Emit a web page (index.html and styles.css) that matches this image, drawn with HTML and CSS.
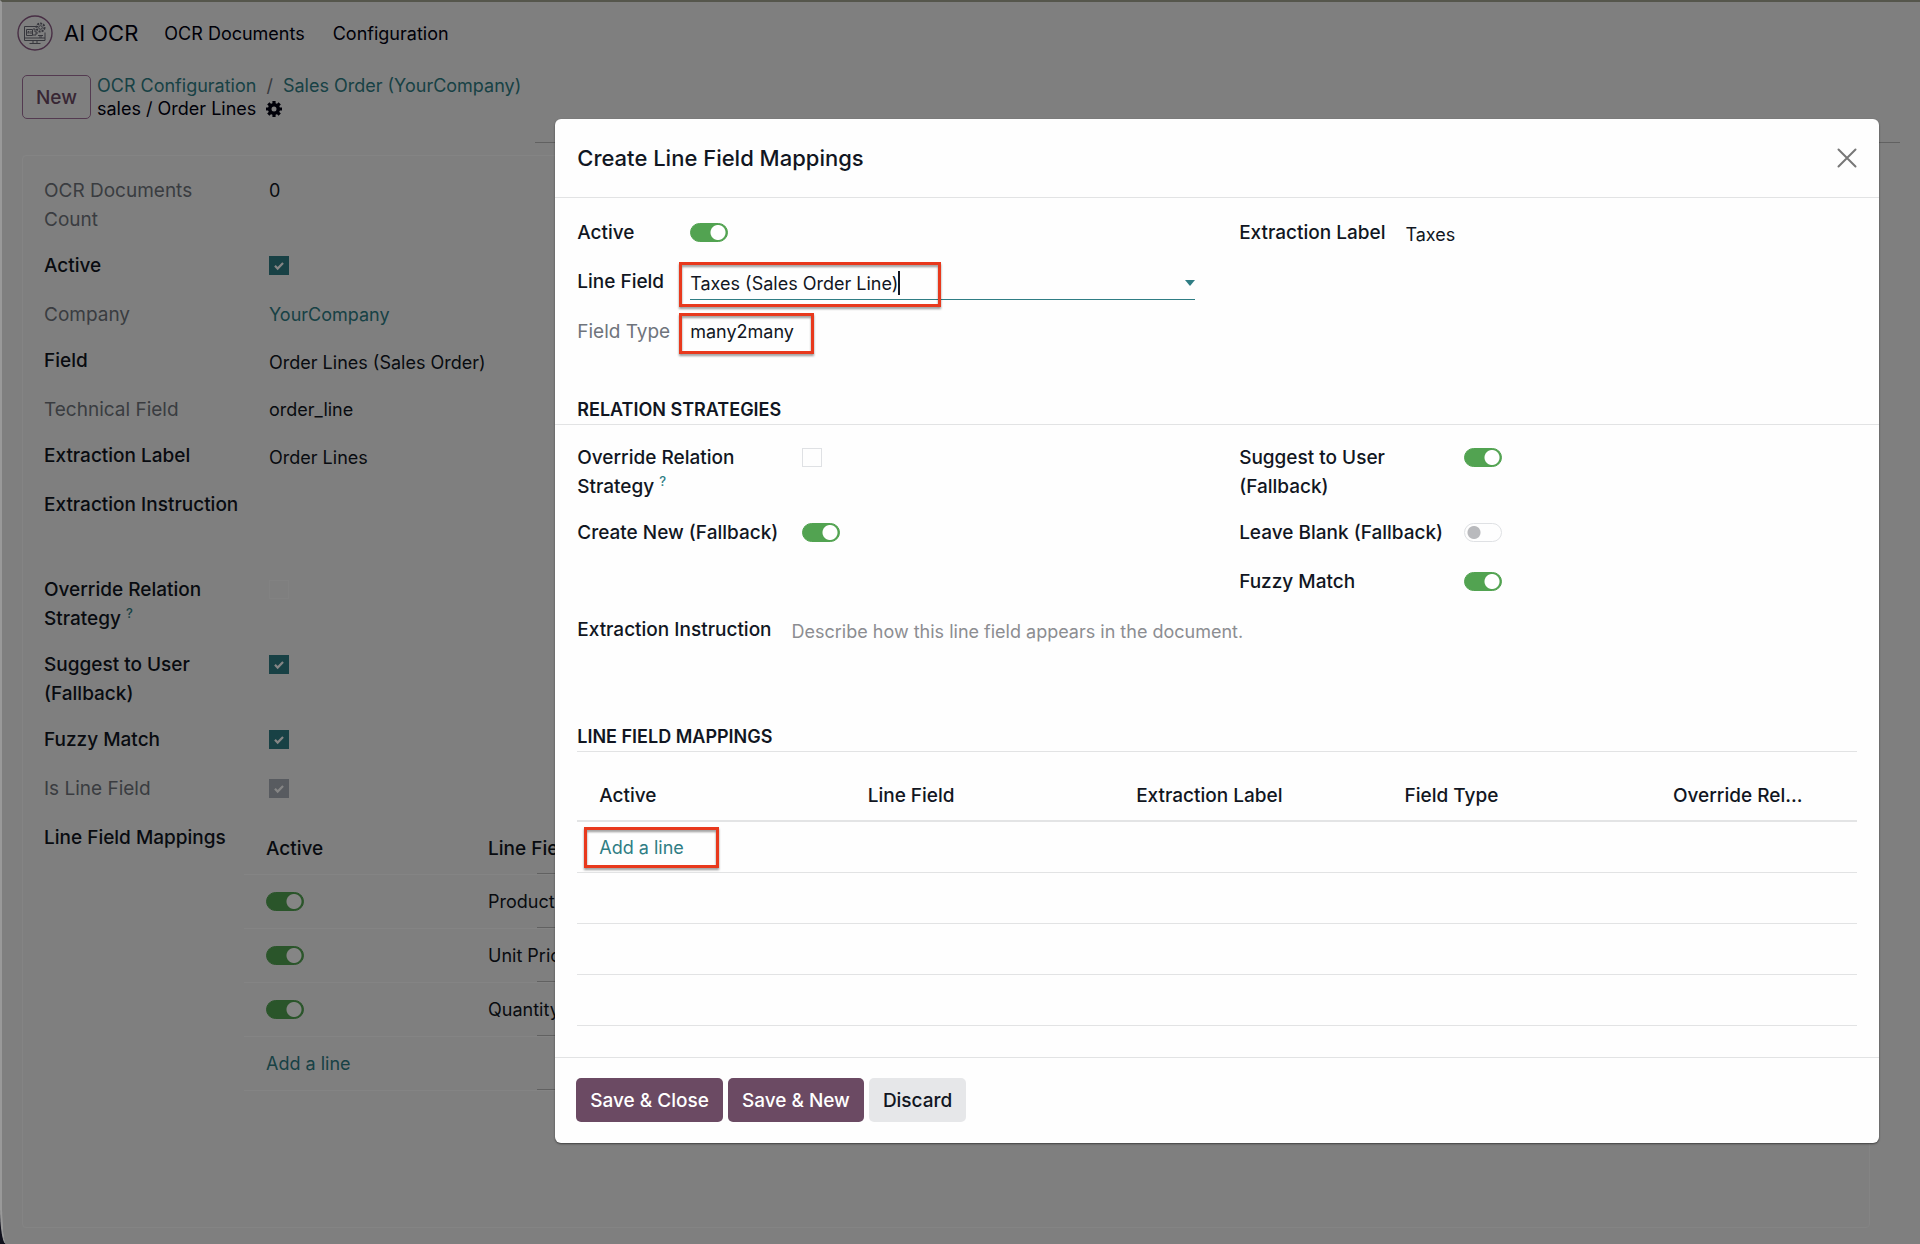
FILE: index.html
```html
<!DOCTYPE html>
<html lang="en">
<head>
<meta charset="utf-8">
<title>AI OCR - sales / Order Lines</title>
<link rel="stylesheet" href="styles.css">
</head>
<body>
<div class="app">

	<header class="navbar">
		<svg class="logo" viewBox="0 0 36 36" aria-hidden="true">
			<circle cx="18" cy="18" r="17" fill="none" stroke="#8a5a84" stroke-width="1.4"/>
			<g fill="none" stroke="#6a6a76" stroke-width="1">
				<path d="M21 11.500H7.500v14h20.500v-8"/>
				<path d="M7.500 23h20.500M16 25.500v3M20 25.500v3M12.500 28.500h11"/>
				<path d="M9.500 14.500h6v6h-6zM11 18.500v-2h1v2M14 16v3M16 14h2v3h2M16 20h3v-2h2"/>
				<path d="M21 20.500h5M22 22h3"/>
			</g>
			<circle cx="23.500" cy="12.500" r="4" fill="none" stroke="#6a6a76" stroke-width="2" stroke-dasharray="2 1"/>
			<circle cx="23.500" cy="12.500" r="1.800" fill="none" stroke="#6a6a76"/>
		</svg>
		<a class="brand" href="#">AI OCR</a>
		<nav class="menu">
			<a href="#">OCR Documents</a>
			<a href="#">Configuration</a>
		</nav>
	</header>

	<div class="control-panel">
		<button type="button" class="btn btn-outline">New</button>
		<div class="breadcrumb">
			<div><a href="#">OCR Configuration</a><span class="sep">/</span><a href="#">Sales Order (YourCompany)</a></div>
			<div class="current">
				<span>sales / Order Lines</span>
				<svg class="gear" viewBox="0 0 16 16" aria-hidden="true">
					<circle cx="8" cy="8" r="4.300" fill="none" stroke="currentColor" stroke-width="3.600"/>
					<path d="M8 0v3M8 13v3M0 8h3M13 8h3M2.300 2.300l2 2M11.700 11.700l2 2M2.300 13.700l2-2M11.700 4.300l2-2" stroke="currentColor" stroke-width="3.200"/>
				</svg>
			</div>
		</div>
	</div>

	<main class="sheet">
		<div class="group group-fixed">
			<span class="label muted">OCR Documents Count</span>
			<div class="value">0</div>

			<label class="label" for="active">Active</label>
			<div class="value"><input type="checkbox" class="check" id="active" checked></div>

			<span class="label muted">Company</span>
			<div class="value short"><a href="#">YourCompany</a></div>

			<span class="label">Field</span>
			<div class="value editable">Order Lines (Sales Order)</div>

			<span class="label muted">Technical Field</span>
			<div class="value short">order_line</div>

			<span class="label">Extraction Label</span>
			<div class="value editable">Order Lines</div>

			<span class="label">Extraction Instruction</span>
			<div class="value tall"></div>

			<label class="label" for="override">Override Relation Strategy <sup>?</sup></label>
			<div class="value"><input type="checkbox" class="check" id="override"></div>

			<label class="label" for="suggest">Suggest to User (Fallback)</label>
			<div class="value"><input type="checkbox" class="check" id="suggest" checked></div>

			<label class="label" for="fuzzy">Fuzzy Match</label>
			<div class="value"><input type="checkbox" class="check" id="fuzzy" checked></div>

			<label class="label muted" for="is-line">Is Line Field</label>
			<div class="value"><input type="checkbox" class="check" id="is-line" checked disabled></div>

			<span class="label">Line Field Mappings</span>
			<table class="lines">
				<thead>
					<tr><th class="col-active">Active</th><th>Line Field</th></tr>
				</thead>
				<tbody>
					<tr><td><input type="checkbox" class="switch" aria-label="Product" checked></td><td>Product</td></tr>
					<tr><td><input type="checkbox" class="switch" aria-label="Unit Price" checked></td><td>Unit Price</td></tr>
					<tr><td><input type="checkbox" class="switch" aria-label="Quantity" checked></td><td>Quantity</td></tr>
					<tr><td><a href="#">Add a line</a></td><td></td></tr>
				</tbody>
			</table>
		</div>
	</main>

	<div class="backdrop">
		<div class="modal" role="dialog" aria-labelledby="modal-title">
			<header class="modal-header">
				<h1 id="modal-title">Create Line Field Mappings</h1>
				<button type="button" class="close" aria-label="Close">
					<svg viewBox="0 0 20 20" aria-hidden="true"><path d="M1.500 1.500l17 17M18.500 1.500l-17 17" stroke="currentColor" stroke-width="2" stroke-linecap="round"/></svg>
				</button>
			</header>

			<div class="modal-body">
				<div class="columns">
					<div class="group">
						<label class="label" for="m-active">Active</label>
						<div class="value"><input type="checkbox" class="switch" id="m-active" checked></div>

						<label class="label" for="m-field">Line Field</label>
						<div class="value marked mark-field">
							<div class="combo">
								<input type="text" id="m-field" value="Taxes (Sales Order Line)">
								<span class="arrow"></span>
							</div>
						</div>

						<span class="label muted">Field Type</span>
						<div class="value marked mark-type">many2many</div>
					</div>
					<div class="group">
						<label class="label" for="m-label">Extraction Label</label>
						<div class="value editable"><input type="text" class="plain" id="m-label" value="Taxes"></div>
					</div>
				</div>

				<h2 class="bleed">Relation Strategies</h2>
				<div class="columns">
					<div class="group group-fixed">
						<label class="label" for="m-override">Override Relation Strategy <sup>?</sup></label>
						<div class="value"><input type="checkbox" class="check" id="m-override"></div>

						<label class="label" for="m-create">Create New (Fallback)</label>
						<div class="value"><input type="checkbox" class="switch" id="m-create" checked></div>
					</div>
					<div class="group group-fixed">
						<label class="label" for="m-suggest">Suggest to User (Fallback)</label>
						<div class="value"><input type="checkbox" class="switch" id="m-suggest" checked></div>

						<label class="label" for="m-blank">Leave Blank (Fallback)</label>
						<div class="value"><input type="checkbox" class="switch" id="m-blank"></div>

						<label class="label" for="m-fuzzy">Fuzzy Match</label>
						<div class="value"><input type="checkbox" class="switch" id="m-fuzzy" checked></div>
					</div>
				</div>
				<div class="group instruction">
					<label class="label" for="m-instruction">Extraction Instruction</label>
					<div class="value editable"><textarea class="plain" id="m-instruction" placeholder="Describe how this line field appears in the document."></textarea></div>
				</div>

				<h2>Line Field Mappings</h2>
				<table class="mappings">
					<thead>
						<tr><th>Active</th><th>Line Field</th><th>Extraction Label</th><th>Field Type</th><th class="col-last">Override Rel...</th></tr>
					</thead>
					<tbody>
						<tr><td colspan="5"><a class="marked mark-add" href="#">Add a line</a></td></tr>
						<tr><td colspan="5"></td></tr>
						<tr><td colspan="5"></td></tr>
						<tr><td colspan="5"></td></tr>
					</tbody>
				</table>
			</div>

			<footer class="modal-footer">
				<button type="button" class="btn btn-primary">Save &amp; Close</button>
				<button type="button" class="btn btn-primary">Save &amp; New</button>
				<button type="button" class="btn btn-secondary">Discard</button>
			</footer>
		</div>
	</div>
</div>
</body>
</html>
```
FILE: styles.css
```css
*,
*::after {
	box-sizing: border-box;
}
body {
	margin: 0;
	background: #10101c;
	color: #111622;
	font-family: Inter, "Liberation Sans", sans-serif;
	font-size: 18px;
	line-height: 29px;
}
a {
	color: #2f7d84;
	text-decoration: none;
}
input,
textarea,
button {
	font: inherit;
	color: inherit;
}
.app {
	position: relative;
	display: flex;
	flex-direction: column;
	min-height: 100vh;
	overflow: hidden;
	background: #f4f4f4;
	border-top: 2px solid #55564c;
	border-left: 2px solid #999;
	border-bottom-left-radius: 6px 36px;
}

/* top bar */
.navbar {
	display: flex;
	align-items: center;
	height: 62px;
	padding: 0 15px;
}
.navbar a {
	color: #000010;
}
.logo {
	width: 36px;
	height: 36px;
}
.brand {
	margin-left: 11px;
	font-size: 22px;
}
.menu {
	display: flex;
	gap: 28px;
	margin-left: 26px;
}
.control-panel {
	display: flex;
	align-items: center;
	gap: 6px;
	padding: 10px 20px 23px;
	background: linear-gradient(to right, transparent 533px, #bbb 533px, #bbb calc(100% - 20px), transparent calc(100% - 20px)) bottom / 100% 1px no-repeat;
}
.breadcrumb {
	line-height: 23px;
}
.sep {
	margin: 0 10px;
	color: #6b6f78;
}
.current {
	display: flex;
	align-items: center;
	gap: 10px;
	color: #000010;
}
.gear {
	width: 16px;
	height: 16px;
}

/* buttons */
.btn {
	height: 44px;
	padding: 0 14px;
	border: 0;
	border-radius: 5px;
	font-size: 19px;
	font-weight: 500;
}
.btn-outline {
	padding: 0 13px;
	border: 1px solid #a0709a;
	background: transparent;
	color: #6b4a64;
}
.btn-primary {
	background: #6b4a63;
	color: #fff;
}
.btn-secondary {
	background: #e6e7e9;
}

/* form */
.sheet {
	flex: 1;
	margin: 12px 50px 16px 20px;
	padding: 20px 21px;
	border: 1px solid #fdfdfd;
	border-radius: 4px;
}
.group {
	display: grid;
	grid-template-columns: max-content 1fr;
	align-content: start;
	gap: 17px 20px;
}
.group-fixed {
	grid-template-columns: 205px 1fr;
}
.label {
	font-size: 19px;
	font-weight: 500;
}
.muted {
	color: #6f747c;
	font-weight: 400;
}
sup {
	color: #2f7d84;
	font-size: 13px;
	line-height: 1;
}
.value {
	position: relative;
	min-height: 32px;
}
.short {
	min-height: 29px;
}
.tall {
	min-height: 68px;
}
.editable {
	padding-top: 2px;
}
.check,
.switch {
	display: block;
	appearance: none;
	margin: 5px 0;
	border: 1px solid #dfe1e4;
}
.check {
	width: 20px;
	height: 19px;
}
.check:checked {
	border-color: #2f7d84;
	background: #2f7d84 url("data:image/svg+xml,%3Csvg xmlns='http://www.w3.org/2000/svg' viewBox='0 0 20 20'%3E%3Cpath d='M5.500 10l3 3 6-6' fill='none' stroke='%23fff' stroke-width='2.500'/%3E%3C/svg%3E") center / 18px no-repeat;
}
.check:disabled {
	border-color: #a9afb8;
	background-color: #a9afb8;
}
.sheet .check:not(:checked) {
	border-color: #fafafa;
}
.switch {
	width: 38px;
	height: 19px;
	border-radius: 10px;
	background: radial-gradient(circle at 9px 50%, #b9babd 6px, transparent 7px);
}
.switch:checked {
	border-color: #52a351;
	background: radial-gradient(circle at 27px 50%, #fff 7px, transparent 8px) #52a351;
}
.plain {
	display: block;
	width: 100%;
	height: 29px;
	padding: 0;
	border: 0;
	outline: 0;
	background: transparent;
	resize: none;
}
textarea.plain {
	height: 74px;
}
.plain::placeholder {
	color: #8c8d91;
}
table {
	width: 100%;
	border-spacing: 0;
	table-layout: fixed;
}
th,
td {
	padding: 0 22px;
	text-align: left;
}
th {
	font-size: 19px;
	font-weight: 500;
}

/* lines already mapped */
.lines {
	width: calc(100% + 25px);
	margin-left: -25px;
}
.lines th,
.lines td {
	height: 54px;
	border-bottom: 1px solid #fdfdfd;
}
.lines th {
	height: 52px;
}
.lines .col-active {
	width: 222px;
}
.lines tr > :last-child {
	background: linear-gradient(to right, transparent 71px, #bbb 71px) bottom / 100% 1px no-repeat;
}

/* dialog */
.backdrop {
	position: absolute;
	inset: 0;
	display: flex;
	align-items: flex-start;
	justify-content: flex-end;
	padding: 117px 41px 40px;
	background: rgba(0, 0, 0, 0.48);
}
.modal {
	width: 72.1%;
	border-radius: 6px;
	background: #fefefe;
	box-shadow: 0 1px 2px rgba(0, 0, 0, 0.5);
}
.modal-header {
	display: flex;
	align-items: center;
	justify-content: space-between;
	height: 79px;
	padding: 0 22px;
	border-bottom: 1px solid #e2e3e4;
}
h1 {
	margin: 0;
	font-size: 22px;
	font-weight: 500;
}
.close {
	padding: 0;
	border: 0;
	background: none;
	color: #777;
}
.close svg {
	display: block;
	width: 20px;
	height: 20px;
}
.modal-body {
	padding: 20px 22px 31px;
}
.columns {
	display: grid;
	grid-template-columns: 1fr 1fr;
	column-gap: 44px;
}
h2 {
	margin: 46px 0 19px;
	border-bottom: 1px solid #e2e3e4;
	font-size: 18px;
	font-weight: 600;
	line-height: 29px;
	text-transform: uppercase;
}
h2.bleed {
	margin: 46px -22px 18px;
	padding: 0 22px;
}
.instruction {
	margin-top: 16px;
}
.instruction + h2 {
	margin-top: 31px;
}
.combo {
	display: flex;
	align-items: center;
	justify-content: space-between;
	height: 33px;
	border-bottom: 1px solid #2f7d84;
}
/* right border stands for the text cursor */
.combo input {
	field-sizing: content;
	height: 24px;
	padding: 0;
	border: 0;
	border-right: 2px solid #111622;
	outline: 0;
	background: none;
}
.arrow {
	border: 5px solid transparent;
	border-top: 6px solid #2f7d84;
	border-bottom: 0;
}
.mappings th {
	height: 51px;
	border-bottom: 2px solid #e3e4e5;
}
.mappings .col-last {
	width: 206px;
}
.mappings td {
	height: 51px;
	border-bottom: 1px solid #e2e3e4;
}

/* red frames round the values to look at */
.marked {
	position: relative;
}
.marked::after {
	content: "";
	position: absolute;
	left: -11px;
	height: 41px;
	border: 3px solid #e8391d;
	filter: drop-shadow(0 2px 1px rgba(0, 0, 0, 0.4));
	pointer-events: none;
}
.mark-field::after {
	top: -5px;
	width: 262px;
	height: 45px;
}
.mark-type::after {
	top: -4px;
	width: 135px;
}
.mark-add::after {
	top: -10px;
	left: -15px;
	width: 135px;
}
.modal-footer {
	display: flex;
	gap: 5px;
	padding: 20px 21px 21px;
	border-top: 1px solid #e2e3e4;
}
```
